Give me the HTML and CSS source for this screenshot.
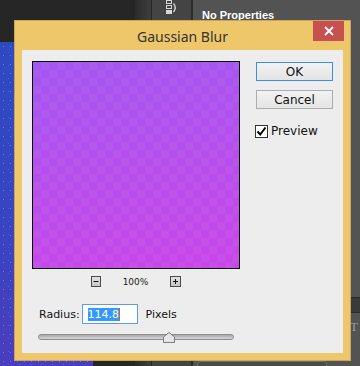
FILE: index.html
```html
<!DOCTYPE html>
<html lang="en">
<head>
    <meta charset="UTF-8">
    <title>Gaussian Blur</title>
    <link rel="stylesheet" href="styles.css">
</head>
<body>
    <div class="app">
        <div class="doc-col">
            <div class="doc-top"></div>
            <div class="doc-row">
                <div class="canvas"></div>
                <div class="doc-gap"></div>
            </div>
        </div>
        <div class="dock-edge"></div>
        <div class="icon-col">
            <svg class="panel-icon" width="12" height="15" viewBox="0 0 12 15">
                <rect x="0.5" y="0.5" width="5" height="3" fill="none" stroke="#d8d8d8"/>
                <rect x="0.5" y="5.5" width="5" height="3" fill="none" stroke="#d8d8d8"/>
                <rect x="0" y="10" width="6" height="4" fill="#d8d8d8"/>
                <path d="M7.5 3.5 Q11 7.5 7.5 12" fill="none" stroke="#d8d8d8" stroke-width="1.3"/>
            </svg>
        </div>
        <div class="panel">
            <div class="panel-head">No Properties</div>
            <div class="panel-fill"></div>
            <div class="panel-band"></div>
            <div class="panel-lower"><span class="tool-glyph">T</span></div>
            <div class="panel-foot"><div class="foot-field"></div></div>
        </div>
    </div>

    <div class="dialog">
        <div class="titlebar">
            <span class="title">Gaussian Blur</span>
            <div class="close-btn">
                <svg width="10" height="10" viewBox="0 0 10 10">
                    <path d="M1 1 L9 9 M9 1 L1 9" stroke="#fff" stroke-width="1.8"/>
                </svg>
            </div>
        </div>
        <div class="client">
            <div class="left">
                <div class="preview"></div>
                <div class="zoom-row">
                    <span class="zoom-btn">
                        <svg width="10" height="11" viewBox="0 0 10 11"><path d="M2.5 5.5 H7.5" stroke="#111" stroke-width="1"/></svg>
                    </span>
                    <span class="zoom-val">100%</span>
                    <span class="zoom-btn plus">
                        <svg width="11" height="11" viewBox="0 0 11 11"><path d="M3 5.5 H8 M5.5 3 V8" stroke="#111" stroke-width="1"/></svg>
                    </span>
                </div>
                <div class="radius-row">
                    <label for="radius">Radius:</label>
                    <div class="radius-input" id="radius"><span class="sel">114.8</span><span class="caret"></span></div>
                    <span class="unit">Pixels</span>
                </div>
                <div class="slider">
                    <svg class="thumb" width="12" height="11" viewBox="0 0 12 11">
                        <path d="M0.5 10.5 V5 L6 0.5 L11.5 5 V10.5 Z" fill="#e6e6e6" stroke="#7d7d7d"/>
                    </svg>
                </div>
            </div>
            <div class="right">
                <button class="btn default">OK</button>
                <button class="btn">Cancel</button>
                <div class="check-row">
                    <span class="checkbox">
                        <svg width="11" height="11" viewBox="0 0 11 11"><path d="M1.5 5.5 L4.2 8.5 L9.5 1.5" fill="none" stroke="#000" stroke-width="2"/></svg>
                    </span>
                    <span>Preview</span>
                </div>
            </div>
        </div>
    </div>
</body>
</html>
```

FILE: styles.css
```css
body {
    margin: 0;
    width: 360px;
    height: 366px;
    overflow: hidden;
    position: relative;
    background: #535353;
    font-family: "DejaVu Sans", sans-serif;
}
.app {
    display: flex;
    height: 366px;
}
.doc-col {
    width: 135px;
    display: flex;
    flex-direction: column;
}
.doc-top {
    height: 42px;
    background: #262626;
}
.doc-row {
    flex: 1;
    display: flex;
}
.canvas {
    width: 93px;
    background:
        radial-gradient(circle, rgba(170,190,255,0.45) 0.5px, transparent 1px) 0 0/7px 9px,
        radial-gradient(circle, rgba(140,160,255,0.3) 0.5px, transparent 1px) 3px 4px/11px 13px,
        linear-gradient(180deg, #2d4ac2 0%, #3844c0 55%, #4a3dbf 100%);
}
.doc-gap {
    flex: 1;
    background: #262626;
}
.dock-edge {
    width: 16px;
    background: linear-gradient(90deg, #2b2b2b, #3e3e3e);
    border-right: 1px solid #262626;
}
.icon-col {
    width: 39px;
    background: #444;
    border-right: 2px solid #2b2b2b;
}
.panel-icon {
    display: block;
    margin: 0 0 0 14px;
}
.panel {
    flex: 1;
    display: flex;
    flex-direction: column;
}
.panel-head {
    padding: 9px 0 0 9px;
    height: 12px;
    font-family: "Liberation Sans", sans-serif;
    font-weight: bold;
    font-size: 11px;
    color: #fff;
}
.panel-fill {
    flex: 1;
}
.panel-band {
    height: 14px;
    background: #3a3a3a;
    border-top: 1px solid #2a2a2a;
    border-bottom: 1px solid #2a2a2a;
}
.panel-lower {
    height: 47px;
    display: flex;
    justify-content: flex-end;
    padding-top: 6px;
    box-sizing: border-box;
}
.tool-glyph {
    font-family: "Liberation Serif", serif;
    font-size: 13px;
    color: #9a9a9a;
    margin-right: 2px;
}
.panel-foot {
    height: 5px;
    padding: 1px 0 0 4px;
}
.foot-field {
    width: 128px;
    height: 10px;
    border: 1px solid #6c6c6c;
    border-radius: 3px;
    background: #4b4b4b;
}

.dialog {
    position: absolute;
    left: 14px;
    top: 20px;
    width: 337px;
    height: 341px;
    box-sizing: border-box;
    border: 1px solid #caa45a;
    background: #efc76b;
    display: flex;
    flex-direction: column;
}
.titlebar {
    height: 29px;
    position: relative;
    display: flex;
    align-items: center;
    justify-content: center;
}
.title {
    font-family: "Noto Sans", sans-serif;
    font-size: 14px;
    color: #333;
    margin-top: 1px;
}
.close-btn {
    position: absolute;
    right: 6px;
    top: 0;
    width: 31px;
    height: 20px;
    background: #c75050;
    display: flex;
    align-items: center;
    justify-content: center;
}
.close-btn svg {
    display: block;
}
.client {
    flex: 1;
    margin: 0 7px 7px 7px;
    background: #ededed;
    display: flex;
    padding: 11px 0 0 10px;
    font-size: 11px;
    color: #111;
}
.left {
    width: 208px;
}
.preview {
    width: 208px;
    height: 208px;
    box-sizing: border-box;
    border: 1px solid #000;
    background:
        conic-gradient(rgba(255,255,255,0.045) 25%, transparent 0 50%, rgba(255,255,255,0.045) 0 75%, transparent 0) 0 0/16px 16px,
        linear-gradient(172deg, #a456f0 0%, #b64eec 50%, #c946e8 100%);
}
.zoom-row {
    margin-top: 7px;
    height: 11px;
    display: flex;
    align-items: center;
    justify-content: center;
    gap: 22px;
}
.zoom-btn {
    width: 10px;
    height: 11px;
    box-sizing: border-box;
    border: 1px solid #4a4a4a;
    background: linear-gradient(#e2e2e2, #c6c6c6);
    display: flex;
    align-items: center;
    justify-content: center;
}
.zoom-btn.plus {
    width: 11px;
}
.zoom-btn svg {
    display: block;
    flex: none;
}
.zoom-val {
    font-size: 9px;
    color: #1a1a1a;
}
.radius-row {
    margin-top: 17px;
    padding-left: 7px;
    height: 20px;
    display: flex;
    align-items: center;
}
.radius-row label {
    margin-right: 2px;
}
.radius-input {
    width: 56px;
    height: 20px;
    box-sizing: border-box;
    border: 1px solid #5b9fe2;
    background: #fff;
    padding: 3px 0 0 5px;
    display: flex;
    align-items: flex-start;
}
.sel {
    background: #3399ff;
    color: #fff;
    line-height: 13px;
    height: 13px;
}
.caret {
    width: 1px;
    height: 13px;
    background: #c86414;
}
.unit {
    margin-left: 8px;
}
.slider {
    position: relative;
    margin: 10px 0 0 6px;
    width: 196px;
    height: 6px;
    box-sizing: border-box;
    border: 1px solid #8d8d8d;
    border-radius: 3px;
    background: linear-gradient(#a9a9a9, #d6d6d6);
}
.thumb {
    position: absolute;
    left: 124px;
    top: -3px;
    display: block;
}
.right {
    width: 77px;
    margin-left: 16px;
    padding-top: 1px;
    display: flex;
    flex-direction: column;
}
.btn {
    height: 19px;
    padding: 0;
    border: 1px solid #acacac;
    background: linear-gradient(#f2f2f2, #e4e4e4);
    font-family: "DejaVu Sans", sans-serif;
    font-size: 12px;
    color: #111;
    line-height: 16px;
}
.btn + .btn {
    margin-top: 9px;
}
.btn.default {
    border-color: #3d8ee0;
}
.check-row {
    margin: 15px 0 0 -1px;
    display: flex;
    align-items: center;
    gap: 3px;
    font-size: 12px;
}
.checkbox {
    width: 13px;
    height: 13px;
    box-sizing: border-box;
    border: 1px solid #333;
    background: #fff;
    display: flex;
    align-items: center;
    justify-content: center;
}
.checkbox svg {
    display: block;
}
```
